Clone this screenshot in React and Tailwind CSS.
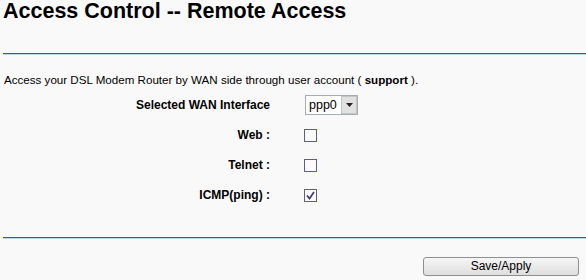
import React from "react";

function Box({ checked }) {
  return (
    <span className="flex h-[13px] w-[13px] items-center justify-center border border-[#5c5c9c] bg-[#fbfbfb]">
      {checked && (
        <svg width="11" height="11" viewBox="0 0 11 11">
          <path d="M2 5.5 L4.5 8.5 L9 2" fill="none" stroke="#3b3b78" strokeWidth="1.7" />
        </svg>
      )}
    </span>
  );
}

function Row({ label, children }) {
  return (
    <div className="flex h-[20px] items-center">
      <div className="w-[270px] text-right font-bold">{label}</div>
      <div className="ml-[34px] flex items-center">{children}</div>
    </div>
  );
}

export default function App() {
  return (
    <div className="h-[280px] w-[586px] overflow-hidden bg-[#f9f9f9] text-[12px] leading-[16px] text-black font-['Liberation_Sans',Arial,sans-serif]">
      <h1 className="pl-[3px] text-[21.5px] font-bold leading-[22px]">Access Control -- Remote Access</h1>
      <div className="ml-[3px] mt-[31px] border-t border-b border-t-[#1d6b9b] border-b-[#bcd6e6]" />
      <p className="mt-[17px] pl-[4px] text-[11.6px]">
        Access your DSL Modem Router by WAN side through user account ( <b>support</b> ).
      </p>

      <div className="mt-[7px] flex flex-col gap-[10px]">
        <Row label="Selected WAN Interface">
          <div className="ml-[1px] flex h-[20px] w-[53px] items-center border border-[#a5acb2] bg-white">
            <span className="flex-1 pl-[3px] text-[12.5px] leading-[18px]">ppp0</span>
            <span className="flex h-[18px] w-[16px] items-center justify-center border border-[#c4c4c4] bg-[#e1e1e1]">
              <svg width="7" height="4" viewBox="0 0 7 4">
                <path d="M0 0 H7 L3.5 4 Z" fill="#222" />
              </svg>
            </span>
          </div>
        </Row>
        <Row label="Web :">
          <Box />
        </Row>
        <Row label="Telnet :">
          <Box />
        </Row>
        <Row label="ICMP(ping) :">
          <Box checked />
        </Row>
      </div>

      <div className="ml-[3px] mt-[32px] border-t border-b border-t-[#1d6b9b] border-b-[#bcd6e6]" />
      <div className="mt-[18px] flex justify-end pr-[7px]">
        <button className="h-[19px] w-[156px] rounded-[3px] border border-[#8e8f8f] bg-gradient-to-b from-[#f6f6f6] to-[#dedede] text-[12px] leading-[17px] text-black">
          Save/Apply
        </button>
      </div>
    </div>
  );
}
